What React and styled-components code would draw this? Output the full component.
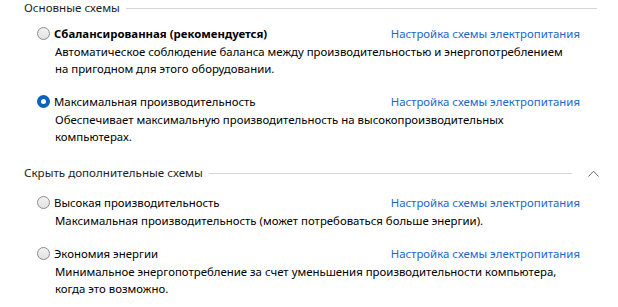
import React from "react";
import styled, { createGlobalStyle } from "styled-components";

const Global = createGlobalStyle`
  html, body { margin: 0; padding: 0; background: #ffffff; }
  body { font-family: "Segoe UI", "Noto Sans", "Open Sans", sans-serif; font-size: 11.4px; color: #000; }
`;

const Page = styled.div`
  width: 618px;
  height: 307px;
  box-sizing: border-box;
  padding: 0 21px 0 24px;
  display: flex;
  flex-direction: column;
`;

const SectionHeader = styled.div`
  display: flex;
  align-items: center;
  gap: 6px;
  height: 16px;
  margin-top: ${(p) => p.$top || 0}px;
  color: #1e1e1e;
  line-height: 16px;
  font-size: 11.6px;
`;

const Rule = styled.div`
  flex: 1;
  height: 1px;
  background: #d5d5d5;
`;

const Chevron = styled.svg`
  width: 11px;
  height: 7px;
  margin-left: 10px;
  margin-right: -2px;
`;

const Plans = styled.div`
  display: flex;
  flex-direction: column;
  gap: 15px;
  padding-left: 13px;
  margin-top: ${(p) => p.$top || 0}px;
`;

const Plan = styled.div`
  display: flex;
  flex-direction: column;
`;

const TitleRow = styled.div`
  display: flex;
  align-items: center;
  height: 18px;
`;

const Radio = styled.span`
  width: 13px;
  height: 13px;
  box-sizing: border-box;
  border-radius: 50%;
  flex: none;
  margin-right: 4px;
  ${(p) =>
    p.$checked
      ? `background: #0a63bd; border: 4px solid #0a63bd;`
      : `background: linear-gradient(#f2f2f2, #e2e2e2); border: 1px solid #8c8c8c;`}
`;

const Dot = styled.span`
  display: block;
  width: 5px;
  height: 5px;
  border-radius: 50%;
  background: #ffffff;
`;

const Title = styled.span`
  font-weight: ${(p) => (p.$bold ? 700 : 400)};
  flex: 1;
  white-space: nowrap;
`;

const Link = styled.a`
  color: #1a66cc;
  text-decoration: none;
  white-space: nowrap;
  margin-right: 17px;
`;

const Desc = styled.div`
  padding-left: 18px;
  line-height: 17px;
  margin-top: 1px;
  white-space: nowrap;
`;

const plansMain = [
  {
    title: "Сбалансированная (рекомендуется)",
    bold: true,
    lines: [
      "Автоматическое соблюдение баланса между производительностью и энергопотреблением",
      "на пригодном для этого оборудовании.",
    ],
  },
  {
    title: "Максимальная производительность",
    checked: true,
    lines: [
      "Обеспечивает максимальную производительность на высокопроизводительных",
      "компьютерах.",
    ],
  },
];

const plansExtra = [
  {
    title: "Высокая производительность",
    lines: ["Максимальная производительность (может потребоваться больше энергии)."],
  },
  {
    title: "Экономия энергии",
    lines: [
      "Минимальное энергопотребление за счет уменьшения производительности компьютера,",
      "когда это возможно.",
    ],
  },
];

function PlanItem({ p }) {
  return (
    <Plan>
      <TitleRow>
        <Radio $checked={p.checked}>{p.checked && <Dot />}</Radio>
        <Title $bold={p.bold}>{p.title}</Title>
        <Link href="#">Настройка схемы электропитания</Link>
      </TitleRow>
      <Desc>
        {p.lines.map((l, i) => (
          <div key={i}>{l}</div>
        ))}
      </Desc>
    </Plan>
  );
}

export default function App() {
  return (
    <>
      <Global />
      <Page>
        <SectionHeader>
          Основные схемы
          <Rule />
        </SectionHeader>
        <Plans $top={8}>
          {plansMain.map((p, i) => (
            <PlanItem key={i} p={p} />
          ))}
        </Plans>
        <SectionHeader $top={20}>
          Скрыть дополнительные схемы
          <Rule />
          <Chevron viewBox="0 0 11 7">
            <path d="M0.5 6.5 L5.5 1.2 L10.5 6.5" fill="none" stroke="#6a6a6a" strokeWidth="1" />
          </Chevron>
        </SectionHeader>
        <Plans $top={12}>
          {plansExtra.map((p, i) => (
            <PlanItem key={i} p={p} />
          ))}
        </Plans>
      </Page>
    </>
  );
}
